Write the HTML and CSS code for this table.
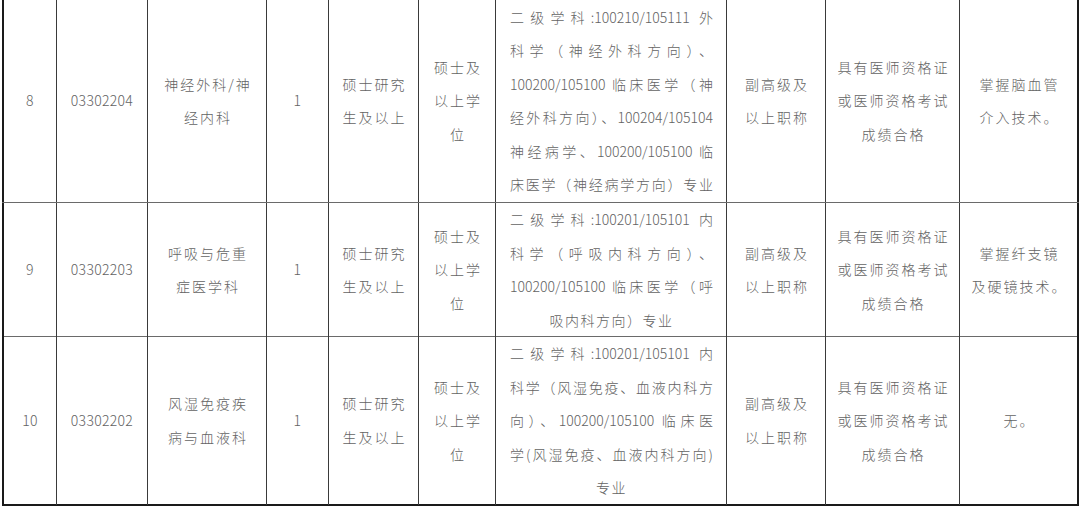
FILE: index.html
```html
<!DOCTYPE html>
<html lang="zh-CN">
<head>
<meta charset="utf-8">
<title>招聘岗位表</title>
<link rel="stylesheet" href="styles.css">
</head>
<body>
<div class="sheet">
  <div class="row r1">
    <div class="cell first num">8</div>
    <div class="cell num">03302204</div>
    <div class="cell txt">神经外科/神<br>经内科</div>
    <div class="cell num">1</div>
    <div class="cell txt">硕士研究<br>生及以上</div>
    <div class="cell txt">硕士及<br>以上学<br>位</div>
    <div class="cell major">
      <span class="ln">二级学科:100210/105111 外</span>
      <span class="ln">科学（神经外科方向）、</span>
      <span class="ln">100200/105100 临床医学（神</span>
      <span class="ln">经外科方向）、100204/105104</span>
      <span class="ln">神经病学、100200/105100 临</span>
      <span class="ln">床医学（神经病学方向）专业</span>
    </div>
    <div class="cell txt">副高级及<br>以上职称</div>
    <div class="cell txt">具有医师资格证<br>或医师资格考试<br>成绩合格</div>
    <div class="cell txt last">掌握脑血管<br>介入技术。</div>
  </div>
  <div class="row r2">
    <div class="cell first num">9</div>
    <div class="cell num">03302203</div>
    <div class="cell txt">呼吸与危重<br>症医学科</div>
    <div class="cell num">1</div>
    <div class="cell txt">硕士研究<br>生及以上</div>
    <div class="cell txt">硕士及<br>以上学<br>位</div>
    <div class="cell major">
      <span class="ln">二级学科:100201/105101 内</span>
      <span class="ln">科学（呼吸内科方向）、</span>
      <span class="ln">100200/105100 临床医学（呼</span>
      <span class="ln end">吸内科方向）专业</span>
    </div>
    <div class="cell txt">副高级及<br>以上职称</div>
    <div class="cell txt">具有医师资格证<br>或医师资格考试<br>成绩合格</div>
    <div class="cell txt last">掌握纤支镜<br>及硬镜技术。</div>
  </div>
  <div class="row r3">
    <div class="cell first num">10</div>
    <div class="cell num">03302202</div>
    <div class="cell txt">风湿免疫疾<br>病与血液科</div>
    <div class="cell num">1</div>
    <div class="cell txt">硕士研究<br>生及以上</div>
    <div class="cell txt">硕士及<br>以上学<br>位</div>
    <div class="cell major">
      <span class="ln">二级学科:100201/105101 内</span>
      <span class="ln">科学（风湿免疫、血液内科方</span>
      <span class="ln">向）、100200/105100 临床医</span>
      <span class="ln">学(风湿免疫、血液内科方向)</span>
      <span class="ln end">专业</span>
    </div>
    <div class="cell txt">副高级及<br>以上职称</div>
    <div class="cell txt">具有医师资格证<br>或医师资格考试<br>成绩合格</div>
    <div class="cell txt last">无。</div>
  </div>
</div>
</body>
</html>
```

FILE: styles.css
```css
html, body {
  margin: 0;
  padding: 0;
  background: #ffffff;
}

body {
  font-family: "Noto Sans CJK SC", "Noto Sans", sans-serif;
  font-size: 14px;
  font-weight: 300;
  color: #636363;
}

.sheet {
  margin-left: 2px;
  width: 1077px;
}

.row {
  display: grid;
  grid-template-columns: 55px 91px 119px 62px 90px 77px 231px 99px 134px 119px;
  box-sizing: border-box;
  border-bottom: 1px solid #6a6a6a;
}

.r1 { height: 203px; }
.r2 { height: 134px; }
.r3 { height: 169px; border-bottom: 2px solid #1a1a1a; }

.cell {
  box-sizing: border-box;
  display: flex;
  align-items: center;
  justify-content: center;
  text-align: center;
  line-height: 33.5px;
  border-right: 1px solid #3a3a3a;
}

.cell.first {
  border-left: 2px solid #1a1a1a;
}

.cell.last {
  border-right: 2px solid #1a1a1a;
}

.num {
  letter-spacing: 0.3px;
}

.txt {
  letter-spacing: 2px;
  padding-left: 2px;
}

.major {
  flex-direction: column;
  align-items: stretch;
  padding: 0 13px 0 14px;
}

.ln {
  display: block;
  white-space: nowrap;
  text-align: justify;
  text-align-last: justify;
}

.ln.end {
  text-align-last: center;
  letter-spacing: 1.5px;
}
```
